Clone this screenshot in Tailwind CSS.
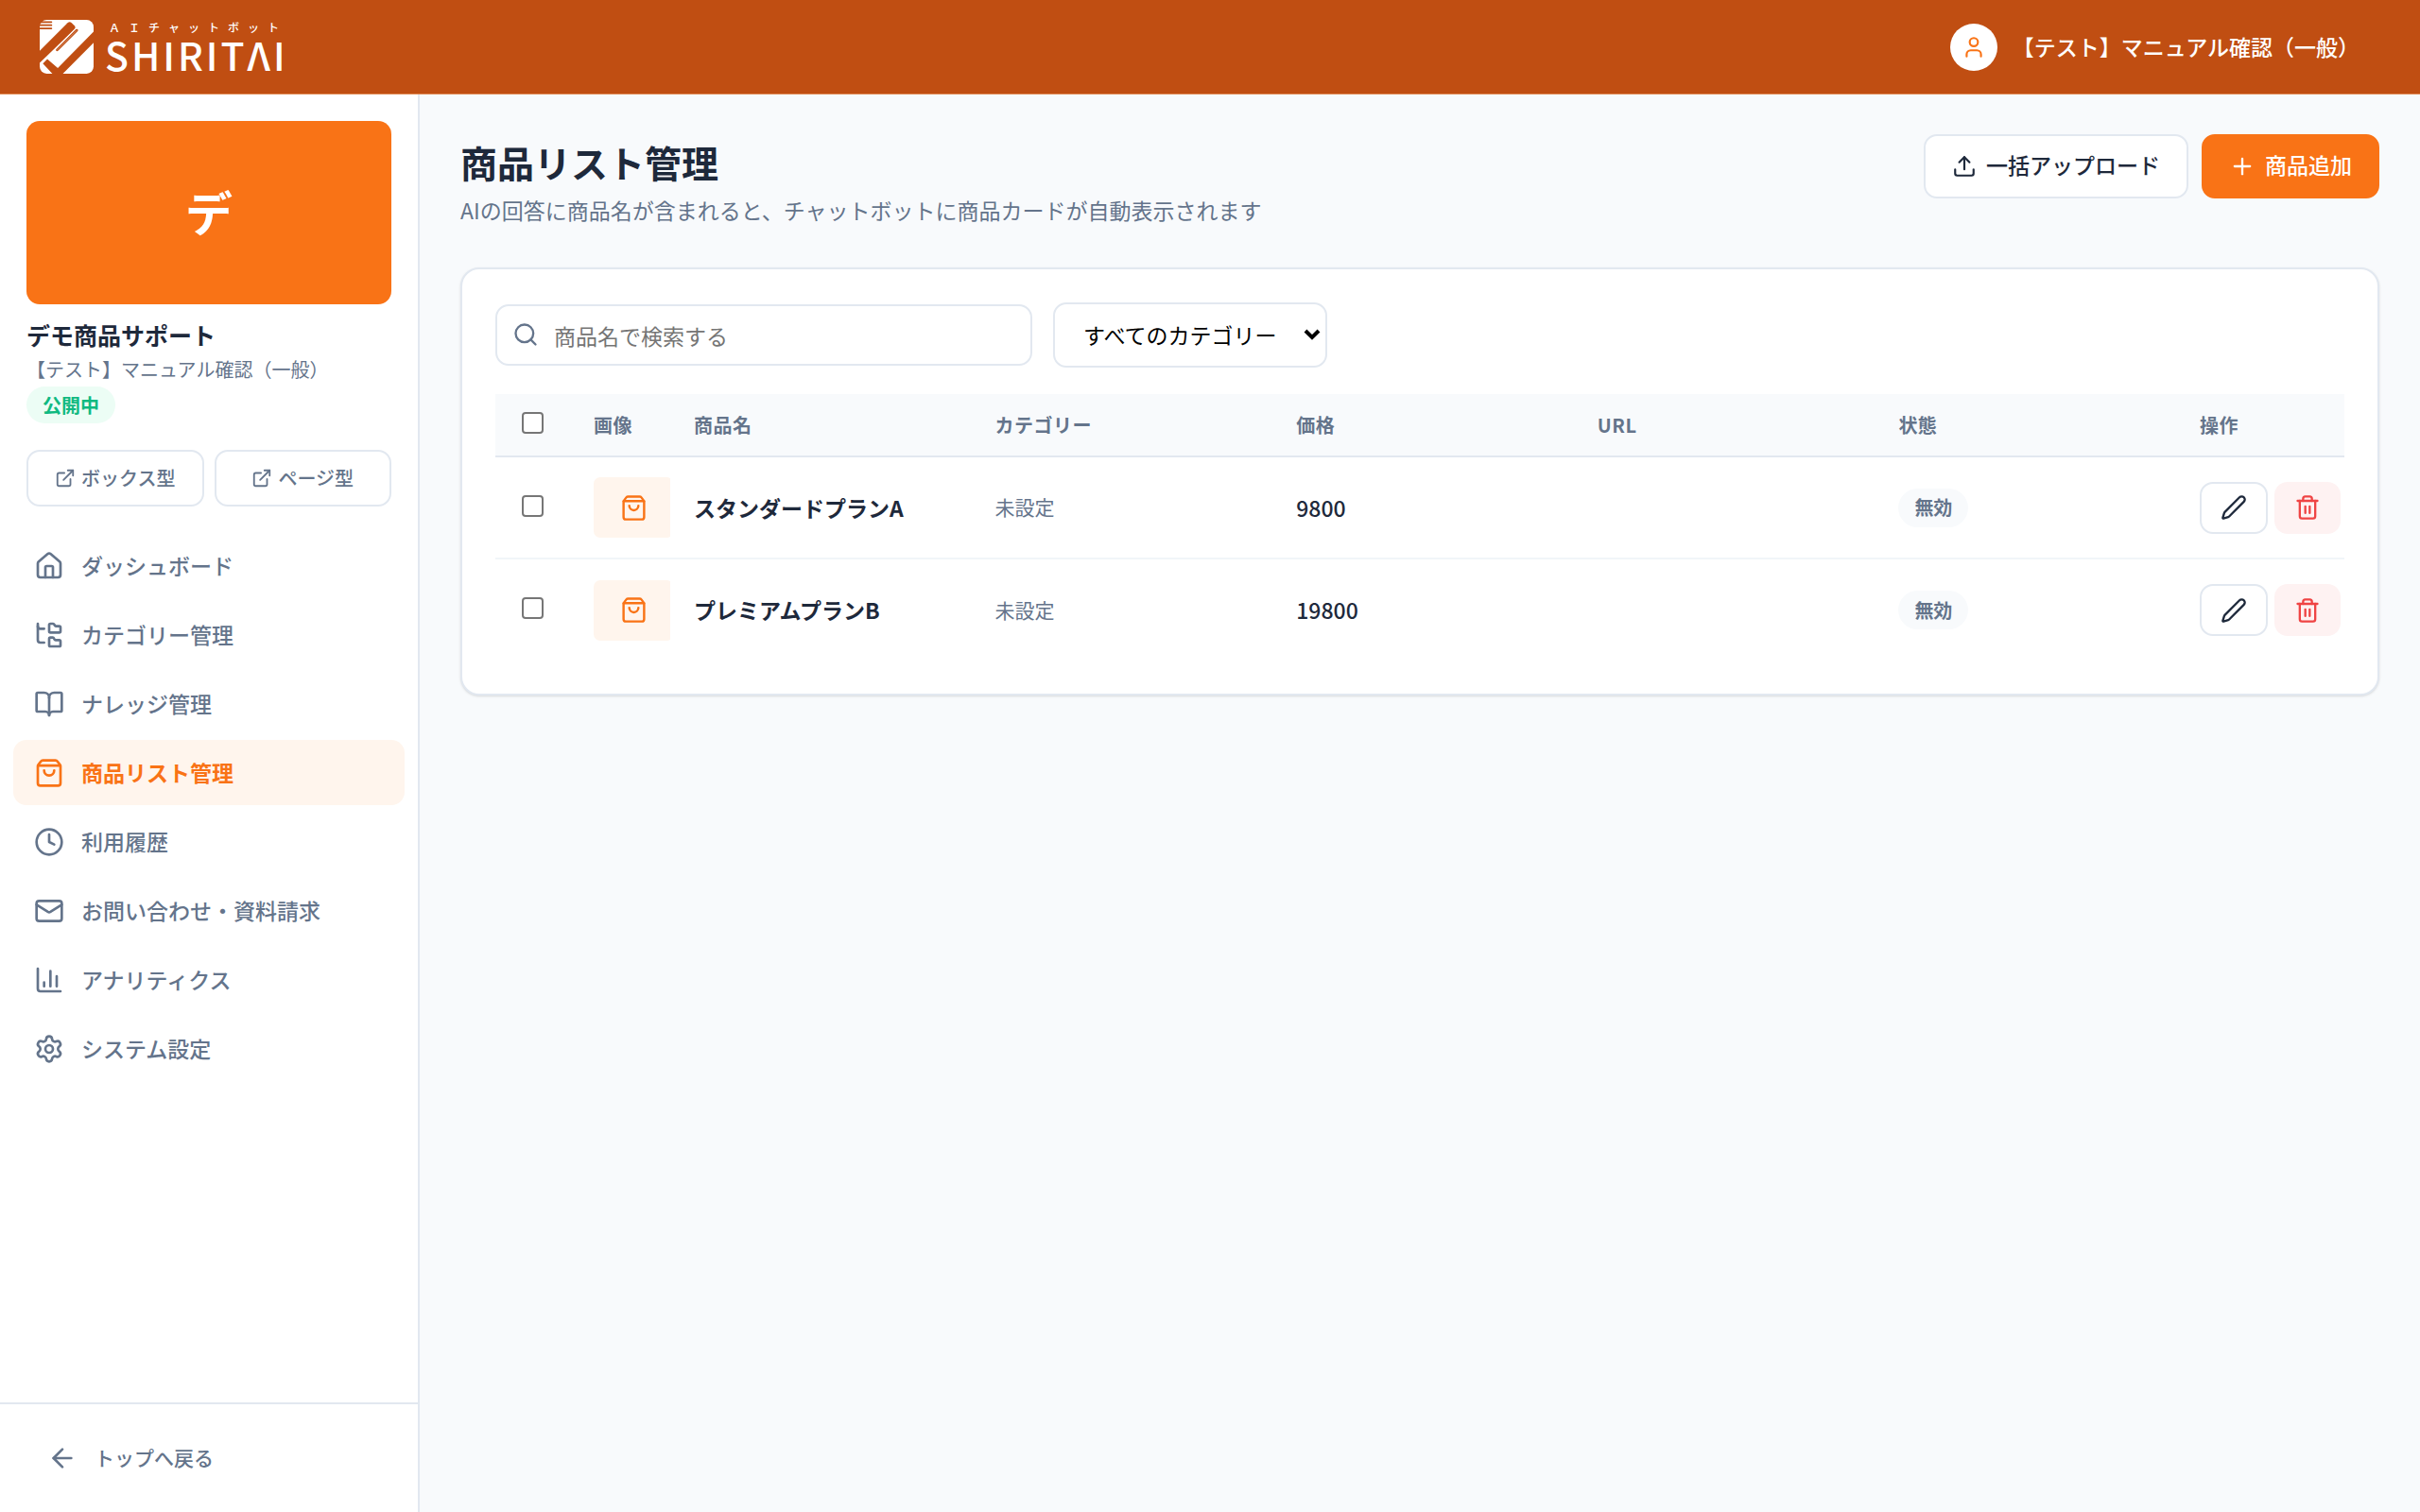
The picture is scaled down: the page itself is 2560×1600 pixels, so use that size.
<!DOCTYPE html>
<html lang="ja">
<head>
  <meta charset="UTF-8" />
  <meta name="viewport" content="width=device-width, initial-scale=1" />
  <title>商品リスト管理 | SHIRITAI</title>
  <script src="https://cdn.jsdelivr.net/npm/@tailwindcss/browser@4"></script>
</head>
<body class="min-h-screen flex flex-col bg-[#f8fafc] text-[#1e293b] text-[23px] font-['Noto_Sans_CJK_JP',sans-serif]">
  <!-- Icons -->
  <svg class="hidden">
    <symbol id="i-house" viewBox="0 0 24 24"><path d="M15 21v-8a1 1 0 0 0-1-1h-4a1 1 0 0 0-1 1v8"/><path d="M3 10a2 2 0 0 1 .709-1.528l7-5.999a2 2 0 0 1 2.582 0l7 5.999A2 2 0 0 1 21 10v9a2 2 0 0 1-2 2H5a2 2 0 0 1-2-2z"/></symbol>
    <symbol id="i-tree" viewBox="0 0 24 24"><path d="M20 10a1 1 0 0 0 1-1V6a1 1 0 0 0-1-1h-2.5a1 1 0 0 1-.8-.4l-.9-1.2A1 1 0 0 0 15 3h-2a1 1 0 0 0-1 1v5a1 1 0 0 0 1 1Z"/><path d="M20 21a1 1 0 0 0 1-1v-3a1 1 0 0 0-1-1h-2.9a1 1 0 0 1-.88-.55l-.42-.85a1 1 0 0 0-.92-.6H13a1 1 0 0 0-1 1v5a1 1 0 0 0 1 1Z"/><path d="M3 5a2 2 0 0 0 2 2h3"/><path d="M3 3v13a2 2 0 0 0 2 2h3"/></symbol>
    <symbol id="i-book" viewBox="0 0 24 24"><path d="M12 7v14"/><path d="M3 18a1 1 0 0 1-1-1V4a1 1 0 0 1 1-1h5a4 4 0 0 1 4 4 4 4 0 0 1 4-4h5a1 1 0 0 1 1 1v13a1 1 0 0 1-1 1h-6a3 3 0 0 0-3 3 3 3 0 0 0-3-3z"/></symbol>
    <symbol id="i-bag" viewBox="0 0 24 24"><path d="M16 10a4 4 0 0 1-8 0"/><path d="M3.103 6.034h17.794"/><path d="M3.4 5.467a2 2 0 0 0-.4 1.2V20a2 2 0 0 0 2 2h14a2 2 0 0 0 2-2V6.667a2 2 0 0 0-.4-1.2l-2-2.667A2 2 0 0 0 17 2H7a2 2 0 0 0-1.6.8z"/></symbol>
    <symbol id="i-clock" viewBox="0 0 24 24"><circle cx="12" cy="12" r="10"/><path d="M12 6v6l4 2"/></symbol>
    <symbol id="i-mail" viewBox="0 0 24 24"><path d="m22 7-8.991 5.727a2 2 0 0 1-2.009 0L2 7"/><rect x="2" y="4" width="20" height="16" rx="2"/></symbol>
    <symbol id="i-chart" viewBox="0 0 24 24"><path d="M3 3v16a2 2 0 0 0 2 2h16"/><path d="M18 17V9"/><path d="M13 17V5"/><path d="M8 17v-3"/></symbol>
    <symbol id="i-gear" viewBox="0 0 24 24"><path d="M9.671 4.136a2.34 2.34 0 0 1 4.659 0 2.34 2.34 0 0 0 3.319 1.915 2.34 2.34 0 0 1 2.33 4.033 2.34 2.34 0 0 0 0 3.831 2.34 2.34 0 0 1-2.33 4.033 2.34 2.34 0 0 0-3.319 1.915 2.34 2.34 0 0 1-4.659 0 2.34 2.34 0 0 0-3.32-1.915 2.34 2.34 0 0 1-2.33-4.033 2.34 2.34 0 0 0 0-3.831A2.34 2.34 0 0 1 6.35 6.051a2.34 2.34 0 0 0 3.319-1.915"/><circle cx="12" cy="12" r="3"/></symbol>
    <symbol id="i-back" viewBox="0 0 24 24"><path d="m12 19-7-7 7-7"/><path d="M19 12H5"/></symbol>
    <symbol id="i-link" viewBox="0 0 24 24"><path d="M15 3h6v6"/><path d="M10 14 21 3"/><path d="M18 13v6a2 2 0 0 1-2 2H5a2 2 0 0 1-2-2V8a2 2 0 0 1 2-2h6"/></symbol>
    <symbol id="i-user" viewBox="0 0 24 24"><path d="M19 21v-2a4 4 0 0 0-4-4H9a4 4 0 0 0-4 4v2"/><circle cx="12" cy="7" r="4"/></symbol>
    <symbol id="i-upload" viewBox="0 0 24 24"><path d="M12 3v12"/><path d="m17 8-5-5-5 5"/><path d="M21 15v4a2 2 0 0 1-2 2H5a2 2 0 0 1-2-2v-4"/></symbol>
    <symbol id="i-plus" viewBox="0 0 24 24"><path d="M5 12h14"/><path d="M12 5v14"/></symbol>
    <symbol id="i-search" viewBox="0 0 24 24"><circle cx="11" cy="11" r="8"/><path d="m21 21-4.34-4.34"/></symbol>
    <symbol id="i-pencil" viewBox="0 0 24 24"><path d="M21.174 6.812a1 1 0 0 0-3.986-3.987L3.842 16.174a2 2 0 0 0-.5.83l-1.321 4.352a.5.5 0 0 0 .623.622l4.353-1.32a2 2 0 0 0 .83-.497z"/></symbol>
    <symbol id="i-trash" viewBox="0 0 24 24"><path d="M10 11v6"/><path d="M14 11v6"/><path d="M19 6v14a2 2 0 0 1-2 2H7a2 2 0 0 1-2-2V6"/><path d="M3 6h18"/><path d="M8 6V4a2 2 0 0 1 2-2h4a2 2 0 0 1 2 2v2"/></symbol>
  </svg>

  <!-- Header -->
  <header class="h-[100px] shrink-0 flex items-center justify-between pl-[42px] pr-16 bg-[#c04e12] border-b border-[#e08a55] text-white">
    <a href="#" class="flex items-center gap-3">
      <svg class="size-[57px]" viewBox="0 0 170 170">
        <rect width="170" height="170" rx="22" fill="#fff"/>
        <g fill="#c04e12">
          <path d="M0 98 88 10Q94 4 100 9L110 19Q115 25 110 30L0 136Z"/>
          <path d="M170 37V72L73 170H40L10 138 24 124 57 152Z"/>
        </g>
        <path d="M117 33 55 95" fill="none" stroke="#fff" stroke-width="16" stroke-linecap="round"/>
        <path d="M117 33 55 95" fill="none" stroke="#c04e12" stroke-width="8" stroke-linecap="round"/>
        <path d="M117 33 55 95" fill="none" stroke="#fff" stroke-width="1"/>
        <path d="M0 7H37M0 17H37M0 27H37" fill="none" stroke="#c04e12" stroke-width="5" stroke-linecap="round"/>
      </svg>
      <span class="flex flex-col">
        <span class="pl-1 text-[12px] leading-[14px] font-medium tracking-[9px]">ＡＩチャットボット</span>
        <span class="text-[41px] leading-[42px] font-medium tracking-[3px]">SHIRITΛI</span>
      </span>
    </a>
    <div class="flex items-center gap-4">
      <span class="size-[50px] rounded-full bg-white flex items-center justify-center">
        <svg class="size-[26px] fill-none stroke-[#f97316] stroke-2" stroke-linecap="round" stroke-linejoin="round"><use href="#i-user"/></svg>
      </span>
      <span class="font-medium">【テスト】マニュアル確認（一般）</span>
    </div>
  </header>

  <div class="flex flex-1">
    <!-- Sidebar -->
    <aside class="w-[444px] shrink-0 flex flex-col bg-white border-r-2 border-[#e2e8f0] text-[#64748b]">
      <div class="px-7 pt-7">
        <div class="h-[194px] pb-1 rounded-[14px] bg-[#f97316] text-white text-[50px] font-bold flex items-center justify-center">デ</div>
        <h2 class="mt-[13px] text-[25px] leading-[38px] font-bold text-[#1e293b]">デモ商品サポート</h2>
        <p class="text-[20px] leading-9">【テスト】マニュアル確認（一般）</p>
        <span class="h-[39px] px-[17px] w-fit flex items-center rounded-full bg-[#ecfdf5] text-[#10b981] text-[20px] font-bold">公開中</span>
        <div class="mt-7 grid grid-cols-2 gap-[11px] text-[20px] font-medium">
          <a href="#" class="h-[60px] flex items-center justify-center gap-[6px] border-2 border-[#e2e8f0] rounded-[14px]">
            <svg class="size-[22px] fill-none stroke-current stroke-2" stroke-linecap="round" stroke-linejoin="round"><use href="#i-link"/></svg>
            ボックス型
          </a>
          <a href="#" class="h-[60px] flex items-center justify-center gap-[6px] border-2 border-[#e2e8f0] rounded-[14px]">
            <svg class="size-[22px] fill-none stroke-current stroke-2" stroke-linecap="round" stroke-linejoin="round"><use href="#i-link"/></svg>
            ページ型
          </a>
        </div>
      </div>

      <nav class="mt-7 px-[14px] flex flex-col gap-1 font-medium">
        <a href="#" class="h-[69px] px-[22px] flex items-center gap-[18px] rounded-[14px]">
          <svg class="size-8 fill-none stroke-current stroke-2" stroke-linecap="round" stroke-linejoin="round"><use href="#i-house"/></svg>
          ダッシュボード
        </a>
        <a href="#" class="h-[69px] px-[22px] flex items-center gap-[18px] rounded-[14px]">
          <svg class="size-8 fill-none stroke-current stroke-2" stroke-linecap="round" stroke-linejoin="round"><use href="#i-tree"/></svg>
          カテゴリー管理
        </a>
        <a href="#" class="h-[69px] px-[22px] flex items-center gap-[18px] rounded-[14px]">
          <svg class="size-8 fill-none stroke-current stroke-2" stroke-linecap="round" stroke-linejoin="round"><use href="#i-book"/></svg>
          ナレッジ管理
        </a>
        <a href="#" aria-current="page" class="h-[69px] px-[22px] flex items-center gap-[18px] rounded-[14px] bg-[#fff5ed] text-[#f97316] font-bold">
          <svg class="size-8 fill-none stroke-current stroke-2" stroke-linecap="round" stroke-linejoin="round"><use href="#i-bag"/></svg>
          商品リスト管理
        </a>
        <a href="#" class="h-[69px] px-[22px] flex items-center gap-[18px] rounded-[14px]">
          <svg class="size-8 fill-none stroke-current stroke-2" stroke-linecap="round" stroke-linejoin="round"><use href="#i-clock"/></svg>
          利用履歴
        </a>
        <a href="#" class="h-[69px] px-[22px] flex items-center gap-[18px] rounded-[14px]">
          <svg class="size-8 fill-none stroke-current stroke-2" stroke-linecap="round" stroke-linejoin="round"><use href="#i-mail"/></svg>
          お問い合わせ・資料請求
        </a>
        <a href="#" class="h-[69px] px-[22px] flex items-center gap-[18px] rounded-[14px]">
          <svg class="size-8 fill-none stroke-current stroke-2" stroke-linecap="round" stroke-linejoin="round"><use href="#i-chart"/></svg>
          アナリティクス
        </a>
        <a href="#" class="h-[69px] px-[22px] flex items-center gap-[18px] rounded-[14px]">
          <svg class="size-8 fill-none stroke-current stroke-2" stroke-linecap="round" stroke-linejoin="round"><use href="#i-gear"/></svg>
          システム設定
        </a>
      </nav>

      <a href="#" class="mt-auto h-[116px] px-[50px] flex items-center gap-[18px] border-t-2 border-[#e2e8f0] text-[21px] font-medium">
        <svg class="size-8 fill-none stroke-current stroke-2" stroke-linecap="round" stroke-linejoin="round"><use href="#i-back"/></svg>
        トップへ戻る
      </a>
    </aside>

    <!-- Main -->
    <main class="flex-1 min-w-0 px-[43px] pt-[42px]">
      <div class="flex items-start justify-between">
        <div>
          <h1 class="text-[39px] leading-[58px] font-bold">商品リスト管理</h1>
          <p class="mt-[2px] leading-10 text-[#64748b]">AIの回答に商品名が含まれると、チャットボットに商品カードが自動表示されます</p>
        </div>
        <div class="flex gap-[14px] font-medium">
          <button class="h-[68px] px-7 flex items-center gap-[10px] bg-white border-2 border-[#e2e8f0] rounded-[14px]">
            <svg class="size-[26px] fill-none stroke-current stroke-2" stroke-linecap="round" stroke-linejoin="round"><use href="#i-upload"/></svg>
            <span class="pb-1">一括アップロード</span>
          </button>
          <button class="h-[68px] px-[27px] flex items-center gap-[10px] bg-[#f97316] border-2 border-[#f97316] rounded-[14px] text-white">
            <svg class="size-7 fill-none stroke-current stroke-2" stroke-linecap="round" stroke-linejoin="round"><use href="#i-plus"/></svg>
            <span class="pb-1">商品追加</span>
          </button>
        </div>
      </div>

      <section class="mt-[41px] p-[35px] bg-white border-2 border-[#e2e8f0] rounded-[20px] shadow-sm">
        <div class="flex items-center gap-[22px]">
          <div class="relative w-[568px]">
            <svg class="absolute left-[18px] top-[18px] size-7 fill-none stroke-[#64748b] stroke-2" stroke-linecap="round" stroke-linejoin="round"><use href="#i-search"/></svg>
            <input type="text" aria-label="商品名で検索する" placeholder="商品名で検索する" class="w-full h-[65px] pl-[60px] pr-5 border-2 border-[#e2e8f0] rounded-[14px] placeholder:text-[#757575]" />
          </div>
          <div class="relative">
            <select aria-label="カテゴリー" class="appearance-none h-[69px] pl-[30px] pr-12 w-[290px] bg-white border-2 border-[#e2e8f0] rounded-[14px] text-black">
              <option>すべてのカテゴリー</option>
              <option>未設定</option>
            </select>
            <svg class="absolute right-[7px] top-[28px] w-[18px] h-3 pointer-events-none fill-none stroke-black stroke-[4]" viewBox="0 0 18 12"><path d="m2 2 7 7 7-7"/></svg>
          </div>
        </div>

        <table class="mt-7 w-full table-fixed text-left">
          <thead class="bg-[#f8fafc] text-[#64748b] text-[20px] tracking-wide">
            <tr class="h-[66px] border-b-2 border-[#e2e8f0]">
              <th class="w-[79px] pl-7 pb-1"><input type="checkbox" aria-label="すべて選択" class="block appearance-none size-[23px] bg-white border-2 border-[#767676] rounded-[4px] checked:bg-[#f97316]" /></th>
              <th class="w-[106px] pl-[25px] font-bold">画像</th>
              <th class="pl-[25px] font-bold">商品名</th>
              <th class="pl-[25px] font-bold">カテゴリー</th>
              <th class="pl-[25px] font-bold">価格</th>
              <th class="pl-[25px] font-bold">URL</th>
              <th class="pl-[25px] font-bold">状態</th>
              <th class="w-[178px] pl-[25px] font-bold">操作</th>
            </tr>
          </thead>
          <tbody>
            <tr class="h-[108px] border-b-2 border-[#f1f5f9]">
              <td class="pl-7 pb-1"><input type="checkbox" aria-label="スタンダードプランAを選択" class="block appearance-none size-[23px] bg-white border-2 border-[#767676] rounded-[4px] checked:bg-[#f97316]" /></td>
              <td class="pl-[25px] overflow-hidden">
                <div class="w-[84px] h-16 rounded-[7px] bg-[#fff5ed] flex items-center justify-center">
                  <svg class="size-[29px] fill-none stroke-[#f97316] stroke-2" stroke-linecap="round" stroke-linejoin="round"><use href="#i-bag"/></svg>
                </div>
              </td>
              <td class="pl-[25px] font-bold">スタンダードプランA</td>
              <td class="pl-[25px] text-[21px] text-[#64748b]">未設定</td>
              <td class="pl-[25px] font-medium">9800</td>
              <td></td>
              <td class="pl-[25px]"><span class="h-[41px] px-[17px] w-fit flex items-center rounded-full bg-[#f8fafc] text-[#64748b] text-[20px] font-bold">無効</span></td>
              <td class="pl-[25px]">
                <div class="flex gap-[7px]">
                  <button aria-label="編集" class="h-[55px] w-[72px] shrink-0 flex items-center justify-center border-2 border-[#e2e8f0] rounded-[14px]"><svg class="size-7 fill-none stroke-current stroke-2" stroke-linecap="round" stroke-linejoin="round"><use href="#i-pencil"/></svg></button>
                  <button aria-label="削除" class="h-[55px] w-[70px] shrink-0 flex items-center justify-center bg-[#fef2f2] rounded-[14px] text-[#ef4444]"><svg class="size-7 fill-none stroke-current stroke-2" stroke-linecap="round" stroke-linejoin="round"><use href="#i-trash"/></svg></button>
                </div>
              </td>
            </tr>
            <tr class="h-[108px]">
              <td class="pl-7 pb-1"><input type="checkbox" aria-label="プレミアムプランBを選択" class="block appearance-none size-[23px] bg-white border-2 border-[#767676] rounded-[4px] checked:bg-[#f97316]" /></td>
              <td class="pl-[25px] overflow-hidden">
                <div class="w-[84px] h-16 rounded-[7px] bg-[#fff5ed] flex items-center justify-center">
                  <svg class="size-[29px] fill-none stroke-[#f97316] stroke-2" stroke-linecap="round" stroke-linejoin="round"><use href="#i-bag"/></svg>
                </div>
              </td>
              <td class="pl-[25px] font-bold">プレミアムプランB</td>
              <td class="pl-[25px] text-[21px] text-[#64748b]">未設定</td>
              <td class="pl-[25px] font-medium">19800</td>
              <td></td>
              <td class="pl-[25px]"><span class="h-[41px] px-[17px] w-fit flex items-center rounded-full bg-[#f8fafc] text-[#64748b] text-[20px] font-bold">無効</span></td>
              <td class="pl-[25px]">
                <div class="flex gap-[7px]">
                  <button aria-label="編集" class="h-[55px] w-[72px] shrink-0 flex items-center justify-center border-2 border-[#e2e8f0] rounded-[14px]"><svg class="size-7 fill-none stroke-current stroke-2" stroke-linecap="round" stroke-linejoin="round"><use href="#i-pencil"/></svg></button>
                  <button aria-label="削除" class="h-[55px] w-[70px] shrink-0 flex items-center justify-center bg-[#fef2f2] rounded-[14px] text-[#ef4444]"><svg class="size-7 fill-none stroke-current stroke-2" stroke-linecap="round" stroke-linejoin="round"><use href="#i-trash"/></svg></button>
                </div>
              </td>
            </tr>
          </tbody>
        </table>
      </section>
    </main>
  </div>
</body>
</html>
